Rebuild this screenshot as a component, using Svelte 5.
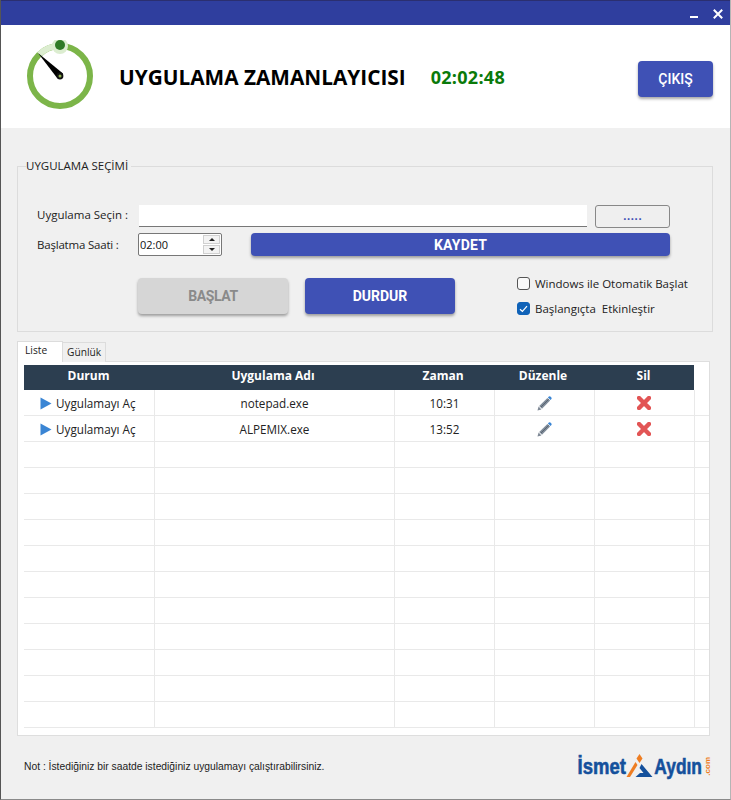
<!--
  Uygulama zamanlayıcısı: title bar, clock header, app selection group and
  the schedule list with its tabs.
-->
<script lang="ts">
  const rows = [
    { name: 'notepad.exe', time: '10:31' },
    { name: 'ALPEMIX.exe', time: '13:52' },
  ];
  const emptyRows = Array.from({ length: 11 });
</script>

{#snippet cells(name: string, time: string, filled: boolean)}
  <div class="row">
    <div class="cell left">
      {#if filled}
        <svg class="play" width="12" height="13" viewBox="0 0 12 13"><path d="M0.5 0.5 L11.5 6.5 L0.5 12.5 Z" fill="#3a85d4" /></svg>
        Uygulamayı Aç
      {/if}
    </div>
    <div class="cell">{name}</div>
    <div class="cell">{time}</div>
    <div class="cell">
      {#if filled}
        <svg width="15" height="15" viewBox="0 0 15 15">
          <path d="M0.5 14.5 L1.6 10.6 L4.4 13.4 Z" fill="#7d8794" />
          <path d="M2.2 10 L10.4 1.9 L13.1 4.6 L5 12.8 Z" fill="#7f8b99" />
          <path d="M4 11 L11.7 3.3" stroke="#59636f" stroke-width="1" />
          <path d="M10.9 1.4 L11.9 0.5 Q12.6 0 13.4 0.6 L14.4 1.6 Q15 2.4 14.4 3.1 L13.6 4.1 Z" fill="#3a85d4" />
        </svg>
      {/if}
    </div>
    <div class="cell">
      {#if filled}
        <svg class="del" width="14" height="14" viewBox="0 0 14 14"><path d="M2 2 L12 12 M12 2 L2 12" stroke="#e25555" stroke-width="4.4" stroke-linecap="square" /></svg>
      {/if}
    </div>
    <div class="cell tail"></div>
  </div>
{/snippet}

<div class="window">
  <div class="titlebar">
    <span class="min"></span>
    <svg class="close" width="10" height="10" viewBox="0 0 10 10"><path d="M0.8 0.8 L9.2 9.2 M9.2 0.8 L0.8 9.2" stroke="#fff" stroke-width="2" /></svg>
  </div>

  <header>
    <svg class="clock" width="70" height="70" viewBox="0 0 70 70">
      <circle cx="35" cy="36" r="30" fill="none" stroke="#7cb549" stroke-width="6" />
      <path d="M35 6 A30 30 0 0 0 14.3 14.3" fill="none" stroke="#dcedd0" stroke-width="6" />
      <circle cx="35" cy="6" r="8" fill="#dcedd0" />
      <circle cx="35" cy="5" r="5" fill="#2f7a26" />
      <path d="M13 13 L38 33.5 L32.5 38.5 Z" fill="#000" />
      <circle cx="35" cy="36" r="3.4" fill="#111" />
      <circle cx="35" cy="36" r="1.5" fill="#8fb34f" />
    </svg>
    <h1>UYGULAMA ZAMANLAYICISI</h1>
    <span class="elapsed">02:02:48</span>
    <button class="primary exit" type="button">ÇIKIŞ</button>
  </header>

  <main>
    <fieldset>
      <legend>UYGULAMA SEÇİMİ</legend>
      <div class="line first">
        <span class="label">Uygulama Seçin :</span>
        <input class="path" type="text" />
        <button class="browse" type="button">.....</button>
      </div>
      <div class="line second">
        <span class="label">Başlatma Saati :</span>
        <div class="spin">
          <span>02:00</span>
          <div class="arrows">
            <i class="up"></i>
            <i class="down"></i>
          </div>
        </div>
        <button class="primary save" type="button">KAYDET</button>
      </div>
      <div class="line third">
        <button class="big disabled" type="button">BAŞLAT</button>
        <button class="big primary" type="button">DURDUR</button>
        <div class="checks">
          <label><span class="box"></span>Windows ile Otomatik Başlat</label>
          <label>
            <span class="box on">
              <svg width="9" height="8" viewBox="0 0 9 8"><path d="M1 4.2 L3.4 6.5 L8 1.2" fill="none" stroke="#fff" stroke-width="1.2" /></svg>
            </span>
            Başlangıçta&nbsp; Etkinleştir
          </label>
        </div>
      </div>
    </fieldset>

    <div class="tabs">
      <span class="tab active">Liste</span>
      <span class="tab">Günlük</span>
    </div>
    <div class="panel">
      <div class="row head">
        <div class="cell">Durum</div>
        <div class="cell">Uygulama Adı</div>
        <div class="cell">Zaman</div>
        <div class="cell">Düzenle</div>
        <div class="cell">Sil</div>
      </div>
      {#each rows as r}
        {@render cells(r.name, r.time, true)}
      {/each}
      {#each emptyRows}
        {@render cells('', '', false)}
      {/each}
    </div>

    <footer>
      <span class="note">Not : İstediğiniz bir saatde istediğiniz uygulamayı çalıştırabilirsiniz.</span>
      <div class="logo">
        <span class="word">İsmet</span>
        <svg width="29" height="25" viewBox="0 0 26 25">
          <path d="M13 0 L16 4.5 L13 9 L10 4.5 Z" fill="#ee7d22" />
          <path d="M9 8 L11 11 L3.5 23 L0 23 Z" fill="#ee7d22" />
          <path d="M15 10 L26 23 L9 23 L13.5 19 L17 19 L13 14 Z" fill="#14509c" />
        </svg>
        <span class="word aydin">Aydın</span>
        <span class="com">.com</span>
      </div>
    </footer>
  </main>
</div>

<style>
  :global(body) {
    margin: 0;
    background: #f0f0f0;
  }
  .window {
    width: 731px;
    height: 800px;
    box-sizing: border-box;
    display: flex;
    flex-direction: column;
    background: #f0f0f0;
    border-left: 1px solid #555;
    border-right: 1px solid #b5b5b5;
    border-bottom: 1px solid #8a8a8a;
    font-family: 'Open Sans', sans-serif;
    color: #1a1a1a;
    overflow: hidden;
  }
  .titlebar {
    height: 25px;
    flex: none;
    box-sizing: border-box;
    margin-left: -1px;
    margin-right: -1px;
    background: #2f3e9e;
    border-top: 1px solid #2b2f70;
    display: flex;
    align-items: flex-start;
    justify-content: flex-end;
    padding-right: 8px;
  }
  .min {
    width: 8px;
    height: 2px;
    background: #fff;
    margin-top: 15px;
    margin-right: 15px;
  }
  .close {
    margin-top: 8px;
  }
  header {
    height: 103px;
    flex: none;
    background: #fff;
    display: flex;
    align-items: center;
    padding-left: 24px;
    padding-right: 17px;
  }
  .clock {
    flex: none;
    margin-top: -3px;
  }
  h1 {
    margin: 0 0 0 24px;
    font-size: 20.8px;
    font-weight: 700;
    color: #000;
    white-space: nowrap;
  }
  .elapsed {
    margin-left: 25px;
    font-size: 18px;
    font-weight: 700;
    color: #0a7a0a;
    letter-spacing: 0.3px;
  }
  button {
    font-family: Roboto, sans-serif;
    padding: 0;
    border: none;
    cursor: pointer;
  }
  .primary {
    background: #3f51b5;
    color: #fff;
    font-weight: 700;
    border-radius: 4px;
    box-shadow: 0 2px 3px rgba(0, 0, 0, 0.35);
  }
  .exit {
    width: 75px;
    height: 36px;
    margin-left: auto;
    margin-top: 4px;
    font-size: 14px;
    font-weight: 500;
  }
  main {
    flex: 1;
    display: flex;
    flex-direction: column;
    padding: 30px 0 0 16px;
  }
  fieldset {
    width: 696px;
    height: 174px;
    box-sizing: border-box;
    margin: 0;
    padding: 0 0 0 19px;
    border: 1px solid #dcdcdc;
    min-width: 0;
  }
  legend {
    font-size: 11.5px;
    padding: 0 3px 0 0;
    margin-left: -11px;
    line-height: 16px;
    color: #222;
  }
  .line {
    display: flex;
    align-items: center;
  }
  .label {
    width: 101px;
    flex: none;
    font-size: 11.5px;
    color: #222;
  }
  .first {
    margin-top: 31px;
    height: 22px;
  }
  .first .label {
    margin-top: -4px;
  }
  .second .label {
    letter-spacing: -0.2px;
  }
  .path {
    width: 448px;
    height: 22px;
    box-sizing: border-box;
    flex: none;
    padding: 0;
    border: none;
    border-bottom: 1px solid #777;
    background: #fff;
    margin-left: 1px;
  }
  .browse {
    width: 75px;
    height: 23px;
    margin-left: 8px;
    background: #efefef;
    border: 1px solid #888;
    border-radius: 3px;
    color: #3f51b5;
    font-weight: 700;
    font-size: 13px;
    line-height: 18px;
  }
  .second {
    margin-top: 6px;
    height: 23px;
  }
  .spin {
    width: 84px;
    height: 23px;
    box-sizing: border-box;
    flex: none;
    background: #fff;
    border: 1px solid #777;
    border-radius: 2px;
    display: flex;
    align-items: center;
    justify-content: space-between;
    padding: 0 1px 0 1px;
    font-size: 11px;
    color: #111;
  }
  .arrows {
    width: 17px;
    height: 19px;
    display: flex;
    flex-direction: column;
    gap: 1px;
  }
  .arrows i {
    flex: 1;
    background: #f3f3f3;
    border: 1px solid #d0d0d0;
    position: relative;
  }
  .arrows i::after {
    content: '';
    position: absolute;
    left: 50%;
    top: 50%;
    margin-left: -3px;
    margin-top: -2px;
    border-left: 3px solid transparent;
    border-right: 3px solid transparent;
  }
  .up::after {
    border-bottom: 3px solid #222;
  }
  .down::after {
    border-top: 3px solid #222;
  }
  .save {
    width: 419px;
    height: 23px;
    margin-left: 29px;
    font-size: 14px;
    letter-spacing: 0.2px;
  }
  .third {
    margin-top: 22px;
    height: 36px;
    padding-left: 101px;
  }
  .big {
    width: 150px;
    height: 36px;
    flex: none;
    font-size: 14px;
    font-weight: 700;
    margin-right: 17px;
    border-radius: 4px;
  }
  .big.primary {
    margin-right: 16px;
  }
  .disabled {
    background: #d6d6d6;
    color: #8a8a8a;
    letter-spacing: -0.4px;
    box-shadow: 0 2px 3px rgba(0, 0, 0, 0.35);
  }
  .checks {
    display: flex;
    flex-direction: column;
    gap: 8px;
    margin-left: 46px;
  }
  .checks label {
    display: flex;
    align-items: center;
    gap: 5px;
    font-size: 11.5px;
    line-height: 17px;
    white-space: nowrap;
    color: #222;
  }
  .box {
    width: 13px;
    height: 13px;
    box-sizing: border-box;
    border: 1px solid #555;
    border-radius: 3px;
    background: #fafafa;
    display: flex;
    align-items: center;
    justify-content: center;
  }
  .box.on {
    background: #0f62b8;
    border-color: #0f62b8;
  }
  .tabs {
    display: flex;
    align-items: flex-end;
    height: 21px;
    margin-top: 9px;
    position: relative;
    z-index: 1;
    margin-bottom: -1px;
  }
  .tab {
    font-size: 10.2px;
    line-height: 19px;
    height: 19px;
    padding: 0 4px;
    border: 1px solid #dcdcdc;
    border-bottom: none;
    background: #f0f0f0;
    margin-left: -1px;
    color: #222;
  }
  .tab:first-child {
    margin-left: 0;
  }
  .tab.active {
    height: 21px;
    line-height: 17px;
    width: 46px;
    box-sizing: border-box;
    padding: 0 0 0 7px;
    background: #fff;
  }
  .panel {
    width: 693px;
    height: 375px;
    box-sizing: border-box;
    background: #fff;
    border: 1px solid #dedede;
    padding: 3px 0 0 6px;
    overflow: hidden;
  }
  .row {
    display: grid;
    grid-template-columns: 131px 240px 100px 100px 100px 13px;
    height: 26px;
    border-bottom: 1px solid #e9e9e9;
    box-sizing: border-box;
  }
  .cell {
    border-right: 1px solid #e9e9e9;
    display: flex;
    align-items: center;
    justify-content: center;
    padding-top: 1px;
    font-size: 11.7px;
    color: #222;
  }
  .cell.left {
    justify-content: flex-start;
    padding-left: 16px;
    gap: 4px;
  }
  .cell.tail {
    border-right: none;
  }
  .del {
    margin-left: -1px;
  }
  .head {
    grid-template-columns: 129px 240px 100px 100px 101px;
    width: 670px;
    height: 25px;
    background: #2c3e50;
    border-bottom: none;
  }
  .head .cell {
    color: #fff;
    font-weight: 700;
    border-right: none;
    padding-top: 0;
    padding-bottom: 5px;
    font-size: 12px;
  }
  footer {
    flex: 1;
    display: flex;
    align-items: center;
    justify-content: space-between;
    padding: 0 18px 0 7px;
  }
  .note {
    font-family: 'Liberation Sans', sans-serif;
    font-size: 10.3px;
    color: #222;
    margin-top: -3px;
  }
  .logo {
    display: flex;
    align-items: center;
    margin-top: -2px;
  }
  .word {
    font-family: 'Liberation Sans', sans-serif;
    font-weight: 700;
    font-size: 22px;
    color: #14509c;
    -webkit-text-stroke: 0.6px #14509c;
    display: inline-block;
    transform: scaleX(0.84);
    margin: 0 -4.5px;
  }
  .aydin {
    transform: scaleX(0.79);
    margin: 0 -6.4px;
  }
  .com {
    font-family: 'Liberation Sans', sans-serif;
    font-size: 8px;
    font-weight: 700;
    color: #ee7d22;
    writing-mode: vertical-rl;
    transform: rotate(180deg);
    margin-left: 1px;
  }
</style>
